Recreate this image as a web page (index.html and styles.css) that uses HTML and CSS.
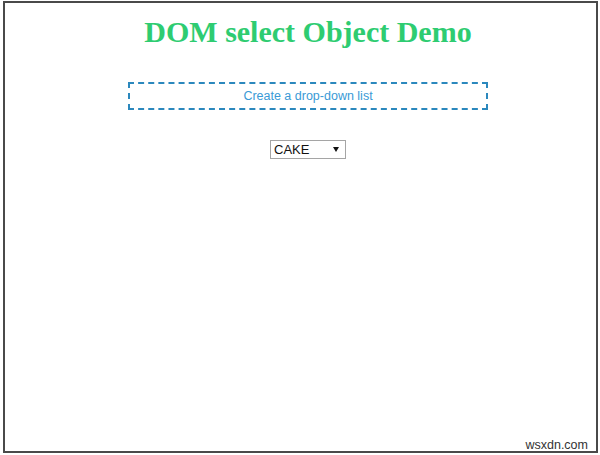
FILE: index.html
```html
<!DOCTYPE html>
<html>
<head>
<meta charset="utf-8">
<link rel="stylesheet" href="styles.css">
</head>
<body>
<div class="frame">
  <div class="content">
    <h1 class="title">DOM select Object Demo</h1>
    <div class="note">Create a drop-down list</div>
    <div class="select-wrap">
      <select class="picker">
        <option>CAKE</option>
        <option>PIE</option>
        <option>COOKIE</option>
      </select>
      <span class="arrow"></span>
    </div>
  </div>
  <span class="watermark">wsxdn.com</span>
</div>
</body>
</html>
```
FILE: styles.css
```css
html, body {
  margin: 0;
  padding: 0;
  background: #ffffff;
}
.frame {
  position: relative;
  box-sizing: border-box;
  margin: 1px 2px 0 3px;
  height: 452px;
  border: 2px solid #4a4a4a;
  background: #ffffff;
}
.content {
  display: flex;
  flex-direction: column;
  align-items: center;
  padding: 12px 0 0 15px;
}
.title {
  margin: 0;
  font-family: "Liberation Serif", "Times New Roman", serif;
  font-weight: bold;
  font-size: 30px;
  line-height: 34px;
  color: #2ecc71;
}
.note {
  box-sizing: border-box;
  margin-top: 33px;
  width: 360px;
  height: 28px;
  border: 2px dashed #2b88bd;
  font-family: "Liberation Sans", Arial, sans-serif;
  font-size: 12.5px;
  line-height: 24px;
  text-align: center;
  color: #3a9ad6;
}
.select-wrap {
  position: relative;
  margin-top: 30px;
  width: 76px;
  height: 19px;
}
.picker {
  -webkit-appearance: none;
  appearance: none;
  box-sizing: border-box;
  width: 76px;
  height: 19px;
  margin: 0;
  padding: 0 0 0 3px;
  border: 1px solid #a5a5a5;
  border-radius: 0;
  background: #ffffff;
  font-family: "Liberation Sans", Arial, sans-serif;
  font-size: 13px;
  line-height: 17px;
  color: #111111;
}
.arrow {
  position: absolute;
  right: 7px;
  top: 7px;
  width: 0;
  height: 0;
  border-left: 3px solid transparent;
  border-right: 3px solid transparent;
  border-top: 5px solid #111111;
  pointer-events: none;
}
.watermark {
  position: absolute;
  right: 8px;
  bottom: -1px;
  font-family: "Liberation Sans", Arial, sans-serif;
  font-size: 12.5px;
  line-height: 14px;
  color: #333333;
}
```
